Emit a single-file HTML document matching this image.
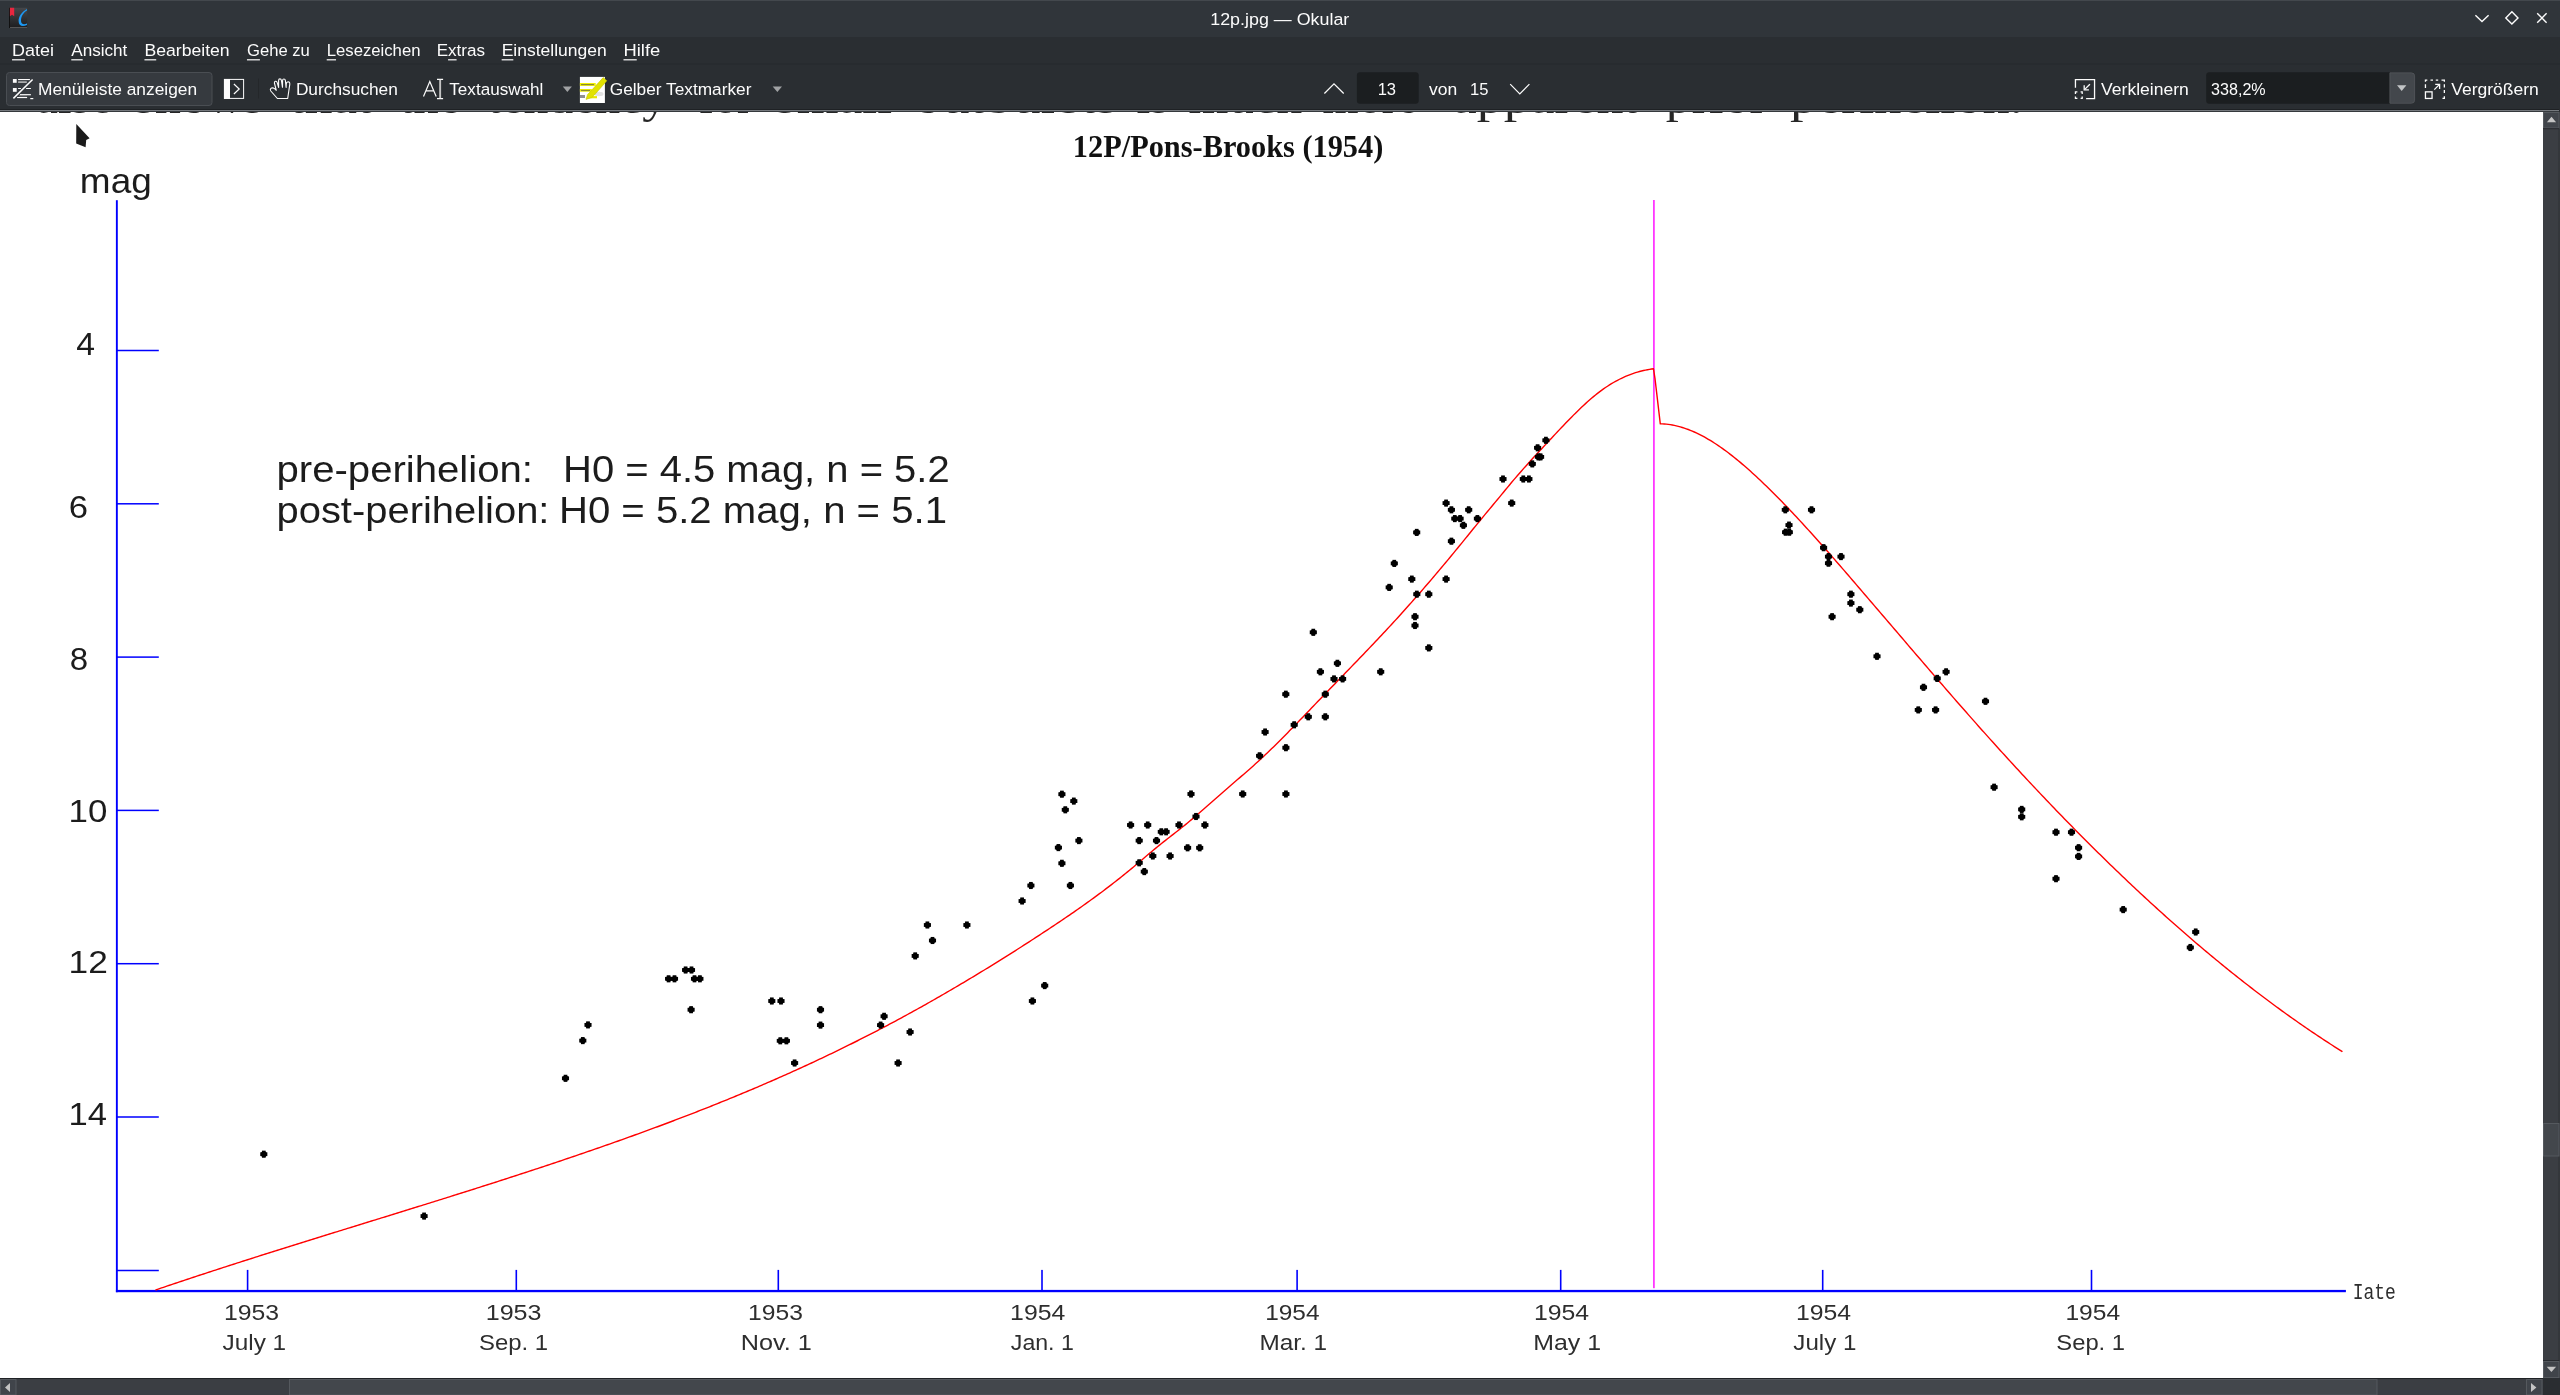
<!DOCTYPE html><html><head><meta charset="utf-8"><title>12p.jpg — Okular</title><style>html,body{margin:0;padding:0;width:2560px;height:1395px;overflow:hidden;background:#2a2e32;font-family:"Liberation Sans",sans-serif}</style></head><body><svg width="2560" height="1395" viewBox="0 0 2560 1395" style="display:block;position:absolute;left:0;top:0;will-change:transform">
<defs><clipPath id="cc"><rect x="0" y="112" width="2543" height="1266"/></clipPath></defs>
<rect x="0" y="0" width="2560" height="37" fill="#30353a"/>
<rect x="0" y="0" width="2560" height="1" fill="#43484d"/>
<rect x="0" y="37" width="2560" height="72" fill="#2a2e32"/>
<rect x="0" y="63.5" width="2560" height="1" fill="#25282c"/>
<rect x="0" y="109" width="2560" height="1" fill="#1e2124"/>
<rect x="0" y="110" width="2560" height="1.4" fill="#75797e"/>
<rect x="0" y="111.4" width="2560" height="0.6" fill="#2a2d31"/>
<rect x="0" y="112" width="2543" height="1266" fill="#ffffff"/>
<text x="1210.24" y="25.00" font-family='"Liberation Sans", sans-serif' font-size="17.40" fill="#fcfcfc" textLength="139.06" lengthAdjust="spacingAndGlyphs" >12p.jpg — Okular</text>
<g><linearGradient id="ag" x1="0" y1="0" x2="0" y2="1"><stop offset="0" stop-color="#45474b"/><stop offset="1" stop-color="#1c1d1f"/></linearGradient><rect x="9" y="7.8" width="18.2" height="20.2" fill="url(#ag)"/><rect x="9" y="7.8" width="1" height="20.2" fill="#111"/><rect x="10" y="27" width="17.2" height="1" fill="#555"/><path d="M9.9,7.8 H14.2 V16.2 L12.05,14.8 L9.9,16.2 Z" fill="#e8263f"/><path d="M27,9 C21.5,12 18.6,16.5 18.6,21 C18.6,25.5 22,27.5 27,25 L27,23.6 C23.5,25 21,24 21,20.8 C21,16.5 23.5,12.5 27,10.6 Z" fill="#1d99f3"/></g>
<g fill="none" stroke="#fcfcfc" stroke-width="1.4"><path d="M2475.4,15.3 L2482,21.6 L2488.6,15.3"/><path d="M2511.9,11.8 L2518,17.9 L2511.9,24 L2505.8,17.9 Z"/><path d="M2537.2,13.3 L2546.6,22.7 M2546.6,13.3 L2537.2,22.7"/></g>
<text x="12.03" y="56.25" font-family='"Liberation Sans", sans-serif' font-size="17.40" fill="#fcfcfc" textLength="41.88" lengthAdjust="spacingAndGlyphs" >Datei</text>
<rect x="12.03" y="59.2" width="12.96" height="1.2" fill="#fcfcfc"/>
<text x="71.27" y="56.25" font-family='"Liberation Sans", sans-serif' font-size="17.40" fill="#fcfcfc" textLength="56.06" lengthAdjust="spacingAndGlyphs" >Ansicht</text>
<rect x="71.27" y="59.2" width="11.40" height="1.2" fill="#fcfcfc"/>
<text x="144.46" y="56.25" font-family='"Liberation Sans", sans-serif' font-size="17.40" fill="#fcfcfc" textLength="85.19" lengthAdjust="spacingAndGlyphs" >Bearbeiten</text>
<rect x="144.46" y="59.2" width="11.75" height="1.2" fill="#fcfcfc"/>
<text x="246.96" y="56.25" font-family='"Liberation Sans", sans-serif' font-size="17.40" fill="#fcfcfc" textLength="62.89" lengthAdjust="spacingAndGlyphs" >Gehe zu</text>
<rect x="246.96" y="59.2" width="12.94" height="1.2" fill="#fcfcfc"/>
<text x="326.73" y="56.25" font-family='"Liberation Sans", sans-serif' font-size="17.40" fill="#fcfcfc" textLength="93.75" lengthAdjust="spacingAndGlyphs" >Lesezeichen</text>
<rect x="326.73" y="59.2" width="9.29" height="1.2" fill="#fcfcfc"/>
<text x="436.70" y="56.25" font-family='"Liberation Sans", sans-serif' font-size="17.40" fill="#fcfcfc" textLength="48.31" lengthAdjust="spacingAndGlyphs" >Extras</text>
<rect x="448.07" y="59.2" width="8.52" height="1.2" fill="#fcfcfc"/>
<text x="501.66" y="56.25" font-family='"Liberation Sans", sans-serif' font-size="17.40" fill="#fcfcfc" textLength="105.07" lengthAdjust="spacingAndGlyphs" >Einstellungen</text>
<rect x="501.66" y="59.2" width="11.67" height="1.2" fill="#fcfcfc"/>
<text x="623.49" y="56.25" font-family='"Liberation Sans", sans-serif' font-size="17.40" fill="#fcfcfc" textLength="36.72" lengthAdjust="spacingAndGlyphs" >Hilfe</text>
<rect x="623.49" y="59.2" width="13.26" height="1.2" fill="#fcfcfc"/>
<rect x="6.5" y="72.5" width="205.5" height="33" rx="3" fill="#363a3f" stroke="#4a4e53" stroke-width="1"/>
<g fill="#fcfcfc"><rect x="12.9" y="79" width="3.8" height="3.8"/><rect x="12.9" y="88" width="3.8" height="3.8"/><rect x="18.1" y="79" width="11.8" height="1.1"/><rect x="18.1" y="81.4" width="8.7" height="1.4" fill="#c8c8c8"/><rect x="18.1" y="88" width="2.8" height="1"/><rect x="26.1" y="88" width="4.8" height="1"/><rect x="20" y="94.1" width="10.9" height="1.2"/><rect x="19.2" y="95.3" width="7.6" height="1" fill="#8a8a8a"/><rect x="17.1" y="97" width="10" height="1.1"/><rect x="30.3" y="98" width="3" height="1.2"/></g>
<path d="M13.4,98.4 L32.6,79.5" stroke="#fcfcfc" stroke-width="1.5" fill="none"/>
<text x="37.98" y="94.80" font-family='"Liberation Sans", sans-serif' font-size="17.40" fill="#fcfcfc" textLength="159.15" lengthAdjust="spacingAndGlyphs" >Menüleiste anzeigen</text>
<rect x="224.4" y="79.4" width="19.2" height="19" fill="none" stroke="#fcfcfc" stroke-width="1"/><rect x="224" y="79" width="6" height="19.9" fill="#fcfcfc"/><path d="M233.9,84 L239.2,89 L233.9,94" fill="none" stroke="#fcfcfc" stroke-width="1.2"/>
<rect x="258" y="78.5" width="1" height="20" fill="#24272a"/>
<path d="M277.4,98.5 L287.7,98.5 L289.8,84.2 Q289.9,81.8 288.1,81.8 Q286.4,81.9 286.3,83.8 L286.1,87.4 L285.4,80.6 Q285.2,79 283.9,79 Q282.6,79 282.6,80.6 L282.5,87.3 L281.4,80.4 Q281.2,78.9 279.9,78.9 Q278.6,78.9 278.6,80.5 L278.6,87.4 L277.2,82.6 Q276.8,81.1 275.5,81.3 Q274.2,81.6 274.4,83 L276.3,90.3 L274.6,88.6 Q272.4,87.2 270.9,88.4 Q269.8,89.6 270.8,91 Z" fill="none" stroke="#fcfcfc" stroke-width="1.1" stroke-linejoin="round"/>
<text x="295.88" y="94.80" font-family='"Liberation Sans", sans-serif' font-size="17.40" fill="#fcfcfc" textLength="101.94" lengthAdjust="spacingAndGlyphs" >Durchsuchen</text>
<path d="M423.5,96.5 L429.8,81.6 L436.2,96.5 M426.3,90.9 L433.4,90.9" fill="none" stroke="#fcfcfc" stroke-width="1.2"/><path d="M437,79.4 H443.1 M437,98.6 H443.1" stroke="#fcfcfc" stroke-width="1.2"/><rect x="439.2" y="79.8" width="1.9" height="18.4" fill="#c4c4c4"/>
<text x="449.32" y="94.80" font-family='"Liberation Sans", sans-serif' font-size="17.40" fill="#fcfcfc" textLength="94.00" lengthAdjust="spacingAndGlyphs" >Textauswahl</text>
<path d="M562.8,86.6 L571.9,86.6 L567.35,92 Z" fill="#a0a2a4"/>
<rect x="579.9" y="76.9" width="25" height="26.1" fill="#ffffff"/><rect x="579.9" y="83" width="15.8" height="2.9" fill="#f0f000"/><rect x="579.9" y="89" width="11.9" height="2.7" fill="#f0f000"/><rect x="587" y="96.1" width="10" height="2.2" fill="#e8e800"/><ellipse cx="599" cy="94" rx="4.5" ry="2.2" fill="#e2e2e2"/><rect x="580" y="95" width="5" height="3" fill="#909090"/><rect x="581" y="84" width="13" height="1.2" fill="#8a8a30"/><rect x="581" y="89.9" width="9" height="1.2" fill="#8a8a30"/><path d="M603.2,77.6 L606.8,80.8 L594.4,95 L591.6,97.6 L586,99.4 L587.6,94.4 L590,92 Z" fill="#e2e200" stroke="#c4c400" stroke-width="0.6"/>
<text x="609.74" y="94.80" font-family='"Liberation Sans", sans-serif' font-size="17.40" fill="#fcfcfc" textLength="141.74" lengthAdjust="spacingAndGlyphs" >Gelber Textmarker</text>
<path d="M772.7,86.6 L782,86.6 L777.35,92 Z" fill="#a0a2a4"/>
<path d="M1324.4,93.5 L1334,83.8 L1343.7,93.5" fill="none" stroke="#fcfcfc" stroke-width="1.2"/>
<rect x="1356.9" y="72.3" width="61.8" height="31.5" rx="3" fill="#1b1e20"/>
<text x="1377.64" y="94.90" font-family='"Liberation Sans", sans-serif' font-size="17.40" fill="#fcfcfc" textLength="18.39" lengthAdjust="spacingAndGlyphs" >13</text>
<text x="1428.94" y="94.90" font-family='"Liberation Sans", sans-serif' font-size="17.40" fill="#fcfcfc" textLength="28.20" lengthAdjust="spacingAndGlyphs" >von</text>
<text x="1469.94" y="94.90" font-family='"Liberation Sans", sans-serif' font-size="17.40" fill="#fcfcfc" textLength="18.46" lengthAdjust="spacingAndGlyphs" >15</text>
<path d="M1510.2,84.2 L1519.8,94 L1529.4,84.2" fill="none" stroke="#fcfcfc" stroke-width="1.2"/>
<g fill="none" stroke="#fcfcfc" stroke-width="1.3"><path d="M2075.45,87.8 V79.7 H2094.55 V98.55 H2086.1"/><path d="M2089.9,84.2 L2084.7,89.4"/><path d="M2084.2,85.2 V89.9 H2088.9"/><path d="M2075.45,93.9 V91.95 H2077.4 M2080.6,91.95 H2082.2 V93.9 M2082.2,96.6 V98.35 H2080.6 M2077.4,98.35 H2075.45 V96.6"/></g>
<text x="2101.12" y="94.70" font-family='"Liberation Sans", sans-serif' font-size="17.40" fill="#fcfcfc" textLength="87.70" lengthAdjust="spacingAndGlyphs" >Verkleinern</text>
<rect x="2206.2" y="72.3" width="208.4" height="31.5" rx="3" fill="#1b1e20"/>
<path d="M2389.9,72.8 H2411.6 Q2414.6,72.8 2414.6,75.8 V100.3 Q2414.6,103.3 2411.6,103.3 H2389.9 Z" fill="#43474c" stroke="#56595e" stroke-width="0.8"/>
<path d="M2397,85.3 L2406.4,85.3 L2401.7,90.9 Z" fill="#c2c4c6"/>
<text x="2211.09" y="94.70" font-family='"Liberation Sans", sans-serif' font-size="17.40" fill="#fcfcfc" textLength="54.59" lengthAdjust="spacingAndGlyphs" >338,2%</text>
<g fill="none" stroke="#fcfcfc" stroke-width="1.3"><rect x="2425.45" y="91.85" width="6.6" height="6.6"/><path d="M2434.3,89.6 L2439.3,84.6"/><path d="M2435.2,84.35 H2439.6 V88.9"/><path d="M2425.45,81.8 V80.05 H2427.3 M2430.5,80.05 H2433 M2435.8,80.05 H2438.2 M2441.5,80.05 H2444.35 V81.8 M2444.35,84.2 V87.4 M2444.35,89.9 V93.1 M2444.35,96.2 V98.35 H2442.5 M2425.45,84.2 V88"/></g>
<text x="2451.22" y="94.70" font-family='"Liberation Sans", sans-serif' font-size="17.40" fill="#fcfcfc" textLength="87.60" lengthAdjust="spacingAndGlyphs" >Vergrößern</text>
<g clip-path="url(#cc)">
<text x="36.29" y="113.40" font-family='"Liberation Serif", serif' font-size="44.00" fill="#262626" textLength="78.57" lengthAdjust="spacingAndGlyphs" >also</text>
<text x="134.88" y="113.40" font-family='"Liberation Serif", serif' font-size="44.00" fill="#262626" textLength="128.98" lengthAdjust="spacingAndGlyphs" >shows</text>
<text x="289.46" y="113.40" font-family='"Liberation Serif", serif' font-size="44.00" fill="#262626" textLength="82.86" lengthAdjust="spacingAndGlyphs" >that</text>
<text x="399.51" y="113.40" font-family='"Liberation Serif", serif' font-size="44.00" fill="#262626" textLength="61.23" lengthAdjust="spacingAndGlyphs" >the</text>
<text x="487.51" y="113.40" font-family='"Liberation Serif", serif' font-size="44.00" fill="#262626" textLength="179.68" lengthAdjust="spacingAndGlyphs" >tendency</text>
<text x="698.58" y="113.40" font-family='"Liberation Serif", serif' font-size="44.00" fill="#262626" textLength="53.83" lengthAdjust="spacingAndGlyphs" >for</text>
<text x="775.80" y="113.40" font-family='"Liberation Serif", serif' font-size="44.00" fill="#262626" textLength="116.28" lengthAdjust="spacingAndGlyphs" >small</text>
<text x="913.88" y="113.40" font-family='"Liberation Serif", serif' font-size="44.00" fill="#262626" textLength="204.13" lengthAdjust="spacingAndGlyphs" >outbursts</text>
<text x="1136.46" y="113.40" font-family='"Liberation Serif", serif' font-size="44.00" fill="#262626" textLength="32.92" lengthAdjust="spacingAndGlyphs" >is</text>
<text x="1188.42" y="113.40" font-family='"Liberation Serif", serif' font-size="44.00" fill="#262626" textLength="113.85" lengthAdjust="spacingAndGlyphs" >much</text>
<text x="1322.53" y="113.40" font-family='"Liberation Serif", serif' font-size="44.00" fill="#262626" textLength="95.08" lengthAdjust="spacingAndGlyphs" >more</text>
<text x="1452.81" y="113.40" font-family='"Liberation Serif", serif' font-size="44.00" fill="#262626" textLength="185.51" lengthAdjust="spacingAndGlyphs" >apparent</text>
<text x="1665.76" y="113.40" font-family='"Liberation Serif", serif' font-size="44.00" fill="#262626" textLength="101.10" lengthAdjust="spacingAndGlyphs" >prior</text>
<text x="1790.13" y="113.40" font-family='"Liberation Serif", serif' font-size="44.00" fill="#262626" textLength="232.84" lengthAdjust="spacingAndGlyphs" >perihelion.</text>
<path d="M76.3,124 L89.6,138.3 L86.2,140 L85.6,147.3 L76.2,143.6 Z" fill="#1a1a1a"/>
<rect x="115.9" y="200.2" width="1.9" height="1092" fill="#0000ff"/>
<rect x="115.9" y="1289.9" width="2230" height="2.3" fill="#0000ff"/>
<rect x="116" y="349.75" width="42.8" height="1.5" fill="#0000ff"/>
<rect x="116" y="503.05" width="42.8" height="1.5" fill="#0000ff"/>
<rect x="116" y="656.35" width="42.8" height="1.5" fill="#0000ff"/>
<rect x="116" y="809.65" width="42.8" height="1.5" fill="#0000ff"/>
<rect x="116" y="962.95" width="42.8" height="1.5" fill="#0000ff"/>
<rect x="116" y="1116.25" width="42.8" height="1.5" fill="#0000ff"/>
<rect x="116" y="1269.75" width="42.8" height="1.5" fill="#0000ff"/>
<rect x="246.80" y="1269.9" width="1.6" height="21" fill="#0000ff"/>
<rect x="515.50" y="1269.9" width="1.6" height="21" fill="#0000ff"/>
<rect x="777.50" y="1269.9" width="1.6" height="21" fill="#0000ff"/>
<rect x="1041.20" y="1269.9" width="1.6" height="21" fill="#0000ff"/>
<rect x="1296.30" y="1269.9" width="1.6" height="21" fill="#0000ff"/>
<rect x="1559.90" y="1269.9" width="1.6" height="21" fill="#0000ff"/>
<rect x="1821.90" y="1269.9" width="1.6" height="21" fill="#0000ff"/>
<rect x="2090.70" y="1269.9" width="1.6" height="21" fill="#0000ff"/>
<rect x="1653" y="200" width="1.8" height="1088.2" fill="#ff38ff"/>
<path d="M155.5,1290.00 L157.5,1289.32 L159.5,1288.64 L161.5,1287.96 L163.5,1287.29 L165.5,1286.61 L167.5,1285.94 L169.5,1285.26 L171.5,1284.59 L173.5,1283.92 L175.5,1283.25 L177.5,1282.58 L179.5,1281.91 L181.5,1281.24 L183.5,1280.57 L185.5,1279.91 L187.5,1279.24 L189.5,1278.58 L191.5,1277.92 L193.5,1277.26 L195.5,1276.60 L197.5,1275.94 L199.5,1275.28 L201.5,1274.62 L203.5,1273.97 L205.5,1273.31 L207.5,1272.66 L209.5,1272.00 L211.5,1271.35 L213.5,1270.70 L215.5,1270.05 L217.5,1269.40 L219.5,1268.75 L221.5,1268.10 L223.5,1267.45 L225.5,1266.81 L227.5,1266.16 L229.5,1265.52 L231.5,1264.87 L233.5,1264.23 L235.5,1263.59 L237.5,1262.94 L239.5,1262.30 L241.5,1261.66 L243.5,1261.02 L245.5,1260.38 L247.5,1259.74 L249.5,1259.11 L251.5,1258.47 L253.5,1257.83 L255.5,1257.20 L257.5,1256.56 L259.5,1255.93 L261.5,1255.29 L263.5,1254.66 L265.5,1254.03 L267.5,1253.40 L269.5,1252.76 L271.5,1252.13 L273.5,1251.50 L275.5,1250.87 L277.5,1250.24 L279.5,1249.61 L281.5,1248.99 L283.5,1248.36 L285.5,1247.73 L287.5,1247.10 L289.5,1246.48 L291.5,1245.85 L293.5,1245.22 L295.5,1244.60 L297.5,1243.97 L299.5,1243.35 L301.5,1242.73 L303.5,1242.10 L305.5,1241.48 L307.5,1240.86 L309.5,1240.23 L311.5,1239.61 L313.5,1238.99 L315.5,1238.37 L317.5,1237.75 L319.5,1237.13 L321.5,1236.50 L323.5,1235.88 L325.5,1235.26 L327.5,1234.64 L329.5,1234.02 L331.5,1233.40 L333.5,1232.78 L335.5,1232.16 L337.5,1231.55 L339.5,1230.93 L341.5,1230.31 L343.5,1229.69 L345.5,1229.07 L347.5,1228.45 L349.5,1227.83 L351.5,1227.22 L353.5,1226.60 L355.5,1225.98 L357.5,1225.36 L359.5,1224.74 L361.5,1224.13 L363.5,1223.51 L365.5,1222.89 L367.5,1222.27 L369.5,1221.65 L371.5,1221.04 L373.5,1220.42 L375.5,1219.80 L377.5,1219.18 L379.5,1218.56 L381.5,1217.95 L383.5,1217.33 L385.5,1216.71 L387.5,1216.09 L389.5,1215.47 L391.5,1214.85 L393.5,1214.23 L395.5,1213.61 L397.5,1213.00 L399.5,1212.38 L401.5,1211.76 L403.5,1211.14 L405.5,1210.52 L407.5,1209.90 L409.5,1209.28 L411.5,1208.66 L413.5,1208.03 L415.5,1207.41 L417.5,1206.79 L419.5,1206.17 L421.5,1205.55 L423.5,1204.92 L425.5,1204.30 L427.5,1203.68 L429.5,1203.06 L431.5,1202.43 L433.5,1201.81 L435.5,1201.18 L437.5,1200.56 L439.5,1199.93 L441.5,1199.31 L443.5,1198.68 L445.5,1198.05 L447.5,1197.43 L449.5,1196.80 L451.5,1196.17 L453.5,1195.54 L455.5,1194.91 L457.5,1194.28 L459.5,1193.65 L461.5,1193.02 L463.5,1192.39 L465.5,1191.76 L467.5,1191.13 L469.5,1190.49 L471.5,1189.86 L473.5,1189.22 L475.5,1188.59 L477.5,1187.95 L479.5,1187.32 L481.5,1186.68 L483.5,1186.04 L485.5,1185.41 L487.5,1184.77 L489.5,1184.13 L491.5,1183.49 L493.5,1182.85 L495.5,1182.21 L497.5,1181.56 L499.5,1180.92 L501.5,1180.28 L503.5,1179.63 L505.5,1178.99 L507.5,1178.34 L509.5,1177.69 L511.5,1177.04 L513.5,1176.40 L515.5,1175.75 L517.5,1175.10 L519.5,1174.44 L521.5,1173.79 L523.5,1173.14 L525.5,1172.48 L527.5,1171.83 L529.5,1171.17 L531.5,1170.52 L533.5,1169.86 L535.5,1169.20 L537.5,1168.54 L539.5,1167.88 L541.5,1167.22 L543.5,1166.56 L545.5,1165.89 L547.5,1165.23 L549.5,1164.56 L551.5,1163.89 L553.5,1163.23 L555.5,1162.56 L557.5,1161.89 L559.5,1161.22 L561.5,1160.54 L563.5,1159.87 L565.5,1159.20 L567.5,1158.52 L569.5,1157.84 L571.5,1157.17 L573.5,1156.49 L575.5,1155.81 L577.5,1155.12 L579.5,1154.44 L581.5,1153.76 L583.5,1153.07 L585.5,1152.39 L587.5,1151.70 L589.5,1151.01 L591.5,1150.32 L593.5,1149.63 L595.5,1148.93 L597.5,1148.24 L599.5,1147.54 L601.5,1146.85 L603.5,1146.15 L605.5,1145.45 L607.5,1144.75 L609.5,1144.04 L611.5,1143.34 L613.5,1142.64 L615.5,1141.93 L617.5,1141.22 L619.5,1140.51 L621.5,1139.80 L623.5,1139.09 L625.5,1138.37 L627.5,1137.66 L629.5,1136.94 L631.5,1136.22 L633.5,1135.50 L635.5,1134.78 L637.5,1134.05 L639.5,1133.33 L641.5,1132.60 L643.5,1131.87 L645.5,1131.14 L647.5,1130.41 L649.5,1129.68 L651.5,1128.94 L653.5,1128.20 L655.5,1127.46 L657.5,1126.72 L659.5,1125.98 L661.5,1125.24 L663.5,1124.49 L665.5,1123.74 L667.5,1122.99 L669.5,1122.24 L671.5,1121.48 L673.5,1120.73 L675.5,1119.97 L677.5,1119.21 L679.5,1118.45 L681.5,1117.69 L683.5,1116.92 L685.5,1116.15 L687.5,1115.38 L689.5,1114.61 L691.5,1113.84 L693.5,1113.06 L695.5,1112.28 L697.5,1111.50 L699.5,1110.72 L701.5,1109.94 L703.5,1109.15 L705.5,1108.36 L707.5,1107.57 L709.5,1106.78 L711.5,1105.98 L713.5,1105.18 L715.5,1104.38 L717.5,1103.58 L719.5,1102.77 L721.5,1101.97 L723.5,1101.16 L725.5,1100.35 L727.5,1099.53 L729.5,1098.72 L731.5,1097.90 L733.5,1097.08 L735.5,1096.25 L737.5,1095.43 L739.5,1094.60 L741.5,1093.77 L743.5,1092.93 L745.5,1092.10 L747.5,1091.26 L749.5,1090.42 L751.5,1089.57 L753.5,1088.73 L755.5,1087.88 L757.5,1087.03 L759.5,1086.17 L761.5,1085.32 L763.5,1084.46 L765.5,1083.59 L767.5,1082.73 L769.5,1081.86 L771.5,1080.99 L773.5,1080.12 L775.5,1079.24 L777.5,1078.36 L779.5,1077.48 L781.5,1076.60 L783.5,1075.71 L785.5,1074.82 L787.5,1073.93 L789.5,1073.03 L791.5,1072.13 L793.5,1071.23 L795.5,1070.33 L797.5,1069.42 L799.5,1068.51 L801.5,1067.60 L803.5,1066.68 L805.5,1065.76 L807.5,1064.84 L809.5,1063.91 L811.5,1062.99 L813.5,1062.05 L815.5,1061.12 L817.5,1060.18 L819.5,1059.24 L821.5,1058.30 L823.5,1057.35 L825.5,1056.40 L827.5,1055.45 L829.5,1054.49 L831.5,1053.53 L833.5,1052.57 L835.5,1051.60 L837.5,1050.63 L839.5,1049.66 L841.5,1048.68 L843.5,1047.70 L845.5,1046.72 L847.5,1045.73 L849.5,1044.74 L851.5,1043.75 L853.5,1042.75 L855.5,1041.75 L857.5,1040.75 L859.5,1039.74 L861.5,1038.73 L863.5,1037.72 L865.5,1036.70 L867.5,1035.68 L869.5,1034.66 L871.5,1033.63 L873.5,1032.60 L875.5,1031.56 L877.5,1030.52 L879.5,1029.48 L881.5,1028.44 L883.5,1027.39 L885.5,1026.33 L887.5,1025.28 L889.5,1024.22 L891.5,1023.15 L893.5,1022.08 L895.5,1021.01 L897.5,1019.94 L899.5,1018.86 L901.5,1017.78 L903.5,1016.69 L905.5,1015.60 L907.5,1014.51 L909.5,1013.42 L911.5,1012.32 L913.5,1011.21 L915.5,1010.11 L917.5,1009.00 L919.5,1007.88 L921.5,1006.77 L923.5,1005.65 L925.5,1004.52 L927.5,1003.40 L929.5,1002.26 L931.5,1001.13 L933.5,999.99 L935.5,998.85 L937.5,997.71 L939.5,996.56 L941.5,995.41 L943.5,994.26 L945.5,993.10 L947.5,991.94 L949.5,990.77 L951.5,989.60 L953.5,988.43 L955.5,987.26 L957.5,986.08 L959.5,984.90 L961.5,983.72 L963.5,982.53 L965.5,981.34 L967.5,980.14 L969.5,978.95 L971.5,977.75 L973.5,976.54 L975.5,975.34 L977.5,974.13 L979.5,972.91 L981.5,971.70 L983.5,970.48 L985.5,969.25 L987.5,968.03 L989.5,966.80 L991.5,965.57 L993.5,964.33 L995.5,963.09 L997.5,961.85 L999.5,960.61 L1001.5,959.36 L1003.5,958.11 L1005.5,956.86 L1007.5,955.60 L1009.5,954.34 L1011.5,953.08 L1013.5,951.81 L1015.5,950.54 L1017.5,949.27 L1019.5,947.99 L1021.5,946.72 L1023.5,945.44 L1025.5,944.15 L1027.5,942.86 L1029.5,941.57 L1031.5,940.28 L1033.5,938.99 L1035.5,937.69 L1037.5,936.39 L1039.5,935.08 L1041.5,933.77 L1043.5,932.46 L1045.5,931.15 L1047.5,929.83 L1049.5,928.51 L1051.5,927.19 L1053.5,925.86 L1055.5,924.53 L1057.5,923.19 L1059.5,921.85 L1061.5,920.50 L1063.5,919.15 L1065.5,917.79 L1067.5,916.42 L1069.5,915.05 L1071.5,913.68 L1073.5,912.30 L1075.5,910.91 L1077.5,909.52 L1079.5,908.11 L1081.5,906.71 L1083.5,905.29 L1085.5,903.87 L1087.5,902.44 L1089.5,901.00 L1091.5,899.55 L1093.5,898.10 L1095.5,896.63 L1097.5,895.16 L1099.5,893.68 L1101.5,892.19 L1103.5,890.69 L1105.5,889.18 L1107.5,887.66 L1109.5,886.13 L1111.5,884.59 L1113.5,883.05 L1115.5,881.48 L1117.5,879.91 L1119.5,878.33 L1121.5,876.74 L1123.5,875.13 L1125.5,873.52 L1127.5,871.89 L1129.5,870.25 L1131.5,868.60 L1133.5,866.93 L1135.5,865.26 L1137.5,863.57 L1139.5,861.88 L1141.5,860.18 L1143.5,858.48 L1145.5,856.79 L1147.5,855.09 L1149.5,853.40 L1151.5,851.72 L1153.5,850.05 L1155.5,848.39 L1157.5,846.74 L1159.5,845.11 L1161.5,843.50 L1163.5,841.91 L1165.5,840.33 L1167.5,838.76 L1169.5,837.21 L1171.5,835.65 L1173.5,834.09 L1175.5,832.54 L1177.5,830.97 L1179.5,829.40 L1181.5,827.82 L1183.5,826.22 L1185.5,824.60 L1187.5,822.96 L1189.5,821.30 L1191.5,819.62 L1193.5,817.93 L1195.5,816.23 L1197.5,814.51 L1199.5,812.78 L1201.5,811.04 L1203.5,809.29 L1205.5,807.54 L1207.5,805.78 L1209.5,804.01 L1211.5,802.24 L1213.5,800.47 L1215.5,798.71 L1217.5,796.94 L1219.5,795.17 L1221.5,793.41 L1223.5,791.66 L1225.5,789.91 L1227.5,788.17 L1229.5,786.44 L1231.5,784.72 L1233.5,783.00 L1235.5,781.29 L1237.5,779.57 L1239.5,777.86 L1241.5,776.14 L1243.5,774.41 L1245.5,772.68 L1247.5,770.94 L1249.5,769.19 L1251.5,767.43 L1253.5,765.65 L1255.5,763.85 L1257.5,762.04 L1259.5,760.21 L1261.5,758.35 L1263.5,756.48 L1265.5,754.60 L1267.5,752.69 L1269.5,750.77 L1271.5,748.84 L1273.5,746.89 L1275.5,744.93 L1277.5,742.95 L1279.5,740.96 L1281.5,738.96 L1283.5,736.95 L1285.5,734.93 L1287.5,732.90 L1289.5,730.86 L1291.5,728.81 L1293.5,726.76 L1295.5,724.70 L1297.5,722.63 L1299.5,720.56 L1301.5,718.48 L1303.5,716.40 L1305.5,714.32 L1307.5,712.24 L1309.5,710.15 L1311.5,708.06 L1313.5,705.98 L1315.5,703.89 L1317.5,701.80 L1319.5,699.72 L1321.5,697.64 L1323.5,695.56 L1325.5,693.49 L1327.5,691.42 L1329.5,689.35 L1331.5,687.28 L1333.5,685.21 L1335.5,683.15 L1337.5,681.08 L1339.5,679.02 L1341.5,676.95 L1343.5,674.89 L1345.5,672.82 L1347.5,670.76 L1349.5,668.69 L1351.5,666.62 L1353.5,664.55 L1355.5,662.48 L1357.5,660.41 L1359.5,658.33 L1361.5,656.25 L1363.5,654.17 L1365.5,652.08 L1367.5,649.99 L1369.5,647.89 L1371.5,645.79 L1373.5,643.69 L1375.5,641.58 L1377.5,639.46 L1379.5,637.34 L1381.5,635.21 L1383.5,633.07 L1385.5,630.93 L1387.5,628.78 L1389.5,626.63 L1391.5,624.46 L1393.5,622.29 L1395.5,620.11 L1397.5,617.92 L1399.5,615.72 L1401.5,613.51 L1403.5,611.29 L1405.5,609.07 L1407.5,606.83 L1409.5,604.59 L1411.5,602.34 L1413.5,600.07 L1415.5,597.80 L1417.5,595.53 L1419.5,593.24 L1421.5,590.94 L1423.5,588.64 L1425.5,586.33 L1427.5,584.01 L1429.5,581.68 L1431.5,579.34 L1433.5,577.00 L1435.5,574.64 L1437.5,572.28 L1439.5,569.91 L1441.5,567.53 L1443.5,565.15 L1445.5,562.75 L1447.5,560.35 L1449.5,557.95 L1451.5,555.53 L1453.5,553.10 L1455.5,550.67 L1457.5,548.23 L1459.5,545.79 L1461.5,543.33 L1463.5,540.87 L1465.5,538.41 L1467.5,535.94 L1469.5,533.47 L1471.5,531.01 L1473.5,528.54 L1475.5,526.08 L1477.5,523.63 L1479.5,521.19 L1481.5,518.75 L1483.5,516.33 L1485.5,513.92 L1487.5,511.51 L1489.5,509.11 L1491.5,506.71 L1493.5,504.31 L1495.5,501.91 L1497.5,499.50 L1499.5,497.08 L1501.5,494.65 L1503.5,492.22 L1505.5,489.78 L1507.5,487.35 L1509.5,484.93 L1511.5,482.54 L1513.5,480.17 L1515.5,477.83 L1517.5,475.51 L1519.5,473.20 L1521.5,470.92 L1523.5,468.66 L1525.5,466.42 L1527.5,464.19 L1529.5,461.97 L1531.5,459.77 L1533.5,457.58 L1535.5,455.40 L1537.5,453.23 L1539.5,451.06 L1541.5,448.91 L1543.5,446.75 L1545.5,444.61 L1547.5,442.46 L1549.5,440.31 L1551.5,438.17 L1553.5,436.03 L1555.5,433.89 L1557.5,431.75 L1559.5,429.63 L1561.5,427.51 L1563.5,425.40 L1565.5,423.31 L1567.5,421.24 L1569.5,419.18 L1571.5,417.14 L1573.5,415.13 L1575.5,413.14 L1577.5,411.17 L1579.5,409.24 L1581.5,407.33 L1583.5,405.45 L1585.5,403.61 L1587.5,401.81 L1589.5,400.05 L1591.5,398.32 L1593.5,396.64 L1595.5,395.00 L1597.5,393.41 L1599.5,391.87 L1601.5,390.38 L1603.5,388.94 L1605.5,387.55 L1607.5,386.21 L1609.5,384.93 L1611.5,383.69 L1613.5,382.51 L1615.5,381.37 L1617.5,380.29 L1619.5,379.25 L1621.5,378.26 L1623.5,377.32 L1625.5,376.43 L1627.5,375.59 L1629.5,374.79 L1631.5,374.04 L1633.5,373.34 L1635.5,372.68 L1637.5,372.07 L1639.5,371.51 L1641.5,370.99 L1643.5,370.51 L1645.5,370.08 L1647.5,369.69 L1649.5,369.35 L1651.5,369.05 L1653.5,368.80 L1653.5,368.80 L1655,378.6 L1660.3,423.8 L1660.3,423.80 L1662.3,423.85 L1664.3,423.97 L1666.3,424.15 L1668.3,424.38 L1670.3,424.67 L1672.3,425.01 L1674.3,425.40 L1676.3,425.84 L1678.3,426.33 L1680.3,426.88 L1682.3,427.47 L1684.3,428.11 L1686.3,428.80 L1688.3,429.53 L1690.3,430.31 L1692.3,431.14 L1694.3,432.01 L1696.3,432.92 L1698.3,433.88 L1700.3,434.87 L1702.3,435.91 L1704.3,436.99 L1706.3,438.11 L1708.3,439.27 L1710.3,440.46 L1712.3,441.70 L1714.3,442.97 L1716.3,444.27 L1718.3,445.61 L1720.3,446.98 L1722.3,448.39 L1724.3,449.83 L1726.3,451.30 L1728.3,452.80 L1730.3,454.33 L1732.3,455.89 L1734.3,457.48 L1736.3,459.09 L1738.3,460.73 L1740.3,462.40 L1742.3,464.10 L1744.3,465.81 L1746.3,467.55 L1748.3,469.32 L1750.3,471.10 L1752.3,472.91 L1754.3,474.74 L1756.3,476.59 L1758.3,478.45 L1760.3,480.34 L1762.3,482.24 L1764.3,484.16 L1766.3,486.09 L1768.3,488.04 L1770.3,490.00 L1772.3,491.98 L1774.3,493.98 L1776.3,495.99 L1778.3,498.01 L1780.3,500.05 L1782.3,502.10 L1784.3,504.17 L1786.3,506.24 L1788.3,508.33 L1790.3,510.43 L1792.3,512.55 L1794.3,514.67 L1796.3,516.81 L1798.3,518.96 L1800.3,521.12 L1802.3,523.29 L1804.3,525.47 L1806.3,527.66 L1808.3,529.85 L1810.3,532.06 L1812.3,534.28 L1814.3,536.50 L1816.3,538.74 L1818.3,540.98 L1820.3,543.22 L1822.3,545.48 L1824.3,547.74 L1826.3,550.01 L1828.3,552.28 L1830.3,554.56 L1832.3,556.85 L1834.3,559.14 L1836.3,561.44 L1838.3,563.74 L1840.3,566.04 L1842.3,568.35 L1844.3,570.66 L1846.3,572.98 L1848.3,575.30 L1850.3,577.62 L1852.3,579.94 L1854.3,582.27 L1856.3,584.60 L1858.3,586.93 L1860.3,589.26 L1862.3,591.59 L1864.3,593.92 L1866.3,596.25 L1868.3,598.59 L1870.3,600.92 L1872.3,603.26 L1874.3,605.60 L1876.3,607.93 L1878.3,610.27 L1880.3,612.61 L1882.3,614.95 L1884.3,617.29 L1886.3,619.63 L1888.3,621.97 L1890.3,624.30 L1892.3,626.64 L1894.3,628.98 L1896.3,631.32 L1898.3,633.66 L1900.3,636.00 L1902.3,638.33 L1904.3,640.67 L1906.3,643.01 L1908.3,645.34 L1910.3,647.68 L1912.3,650.01 L1914.3,652.34 L1916.3,654.67 L1918.3,657.00 L1920.3,659.33 L1922.3,661.66 L1924.3,663.98 L1926.3,666.31 L1928.3,668.63 L1930.3,670.95 L1932.3,673.27 L1934.3,675.59 L1936.3,677.90 L1938.3,680.21 L1940.3,682.53 L1942.3,684.83 L1944.3,687.14 L1946.3,689.44 L1948.3,691.75 L1950.3,694.04 L1952.3,696.34 L1954.3,698.63 L1956.3,700.93 L1958.3,703.21 L1960.3,705.50 L1962.3,707.78 L1964.3,710.06 L1966.3,712.33 L1968.3,714.60 L1970.3,716.87 L1972.3,719.14 L1974.3,721.40 L1976.3,723.66 L1978.3,725.91 L1980.3,728.16 L1982.3,730.41 L1984.3,732.65 L1986.3,734.89 L1988.3,737.12 L1990.3,739.35 L1992.3,741.57 L1994.3,743.79 L1996.3,746.01 L1998.3,748.22 L2000.3,750.43 L2002.3,752.63 L2004.3,754.83 L2006.3,757.02 L2008.3,759.21 L2010.3,761.40 L2012.3,763.58 L2014.3,765.76 L2016.3,767.93 L2018.3,770.09 L2020.3,772.26 L2022.3,774.41 L2024.3,776.57 L2026.3,778.72 L2028.3,780.86 L2030.3,783.00 L2032.3,785.14 L2034.3,787.27 L2036.3,789.39 L2038.3,791.51 L2040.3,793.63 L2042.3,795.74 L2044.3,797.85 L2046.3,799.95 L2048.3,802.05 L2050.3,804.14 L2052.3,806.23 L2054.3,808.31 L2056.3,810.39 L2058.3,812.46 L2060.3,814.53 L2062.3,816.59 L2064.3,818.65 L2066.3,820.71 L2068.3,822.76 L2070.3,824.80 L2072.3,826.84 L2074.3,828.87 L2076.3,830.90 L2078.3,832.93 L2080.3,834.95 L2082.3,836.96 L2084.3,838.97 L2086.3,840.98 L2088.3,842.98 L2090.3,844.97 L2092.3,846.96 L2094.3,848.94 L2096.3,850.92 L2098.3,852.90 L2100.3,854.87 L2102.3,856.83 L2104.3,858.79 L2106.3,860.75 L2108.3,862.69 L2110.3,864.64 L2112.3,866.58 L2114.3,868.51 L2116.3,870.44 L2118.3,872.36 L2120.3,874.28 L2122.3,876.19 L2124.3,878.10 L2126.3,880.00 L2128.3,881.90 L2130.3,883.79 L2132.3,885.68 L2134.3,887.56 L2136.3,889.43 L2138.3,891.30 L2140.3,893.17 L2142.3,895.03 L2144.3,896.88 L2146.3,898.73 L2148.3,900.57 L2150.3,902.41 L2152.3,904.24 L2154.3,906.07 L2156.3,907.89 L2158.3,909.71 L2160.3,911.52 L2162.3,913.33 L2164.3,915.13 L2166.3,916.92 L2168.3,918.71 L2170.3,920.49 L2172.3,922.27 L2174.3,924.04 L2176.3,925.81 L2178.3,927.57 L2180.3,929.32 L2182.3,931.07 L2184.3,932.82 L2186.3,934.55 L2188.3,936.29 L2190.3,938.01 L2192.3,939.73 L2194.3,941.45 L2196.3,943.16 L2198.3,944.86 L2200.3,946.56 L2202.3,948.25 L2204.3,949.94 L2206.3,951.62 L2208.3,953.30 L2210.3,954.97 L2212.3,956.63 L2214.3,958.29 L2216.3,959.94 L2218.3,961.58 L2220.3,963.22 L2222.3,964.86 L2224.3,966.49 L2226.3,968.11 L2228.3,969.73 L2230.3,971.34 L2232.3,972.94 L2234.3,974.54 L2236.3,976.13 L2238.3,977.72 L2240.3,979.30 L2242.3,980.87 L2244.3,982.44 L2246.3,984.00 L2248.3,985.56 L2250.3,987.11 L2252.3,988.65 L2254.3,990.19 L2256.3,991.72 L2258.3,993.25 L2260.3,994.77 L2262.3,996.28 L2264.3,997.79 L2266.3,999.29 L2268.3,1000.78 L2270.3,1002.27 L2272.3,1003.76 L2274.3,1005.23 L2276.3,1006.70 L2278.3,1008.17 L2280.3,1009.62 L2282.3,1011.07 L2284.3,1012.52 L2286.3,1013.96 L2288.3,1015.39 L2290.3,1016.81 L2292.3,1018.23 L2294.3,1019.65 L2296.3,1021.05 L2298.3,1022.45 L2300.3,1023.85 L2302.3,1025.23 L2304.3,1026.62 L2306.3,1027.99 L2308.3,1029.36 L2310.3,1030.72 L2312.3,1032.07 L2314.3,1033.42 L2316.3,1034.76 L2318.3,1036.10 L2320.3,1037.43 L2322.3,1038.75 L2324.3,1040.07 L2326.3,1041.38 L2328.3,1042.68 L2330.3,1043.97 L2332.3,1045.26 L2334.3,1046.55 L2336.3,1047.82 L2338.3,1049.09 L2340.3,1050.35 L2342.3,1051.61 L2342.4,1051.70" fill="none" stroke="#ff0000" stroke-width="1.4" stroke-linejoin="round"/>
<defs><g id="dt"><rect x="-1.85" y="-3.55" width="3.7" height="7.1"/><rect x="-3.55" y="-1.9" width="7.1" height="3.8"/><circle r="2.85"/></g></defs>
<g fill="#000">
<use href="#dt" x="1416.7" y="532.4"/>
<use href="#dt" x="1451.4" y="541.2"/>
<use href="#dt" x="1446.1" y="503.1"/>
<use href="#dt" x="1451.4" y="509.8"/>
<use href="#dt" x="1454.8" y="518.6"/>
<use href="#dt" x="1460.1" y="518.6"/>
<use href="#dt" x="1463.4" y="525.3"/>
<use href="#dt" x="1468.7" y="509.8"/>
<use href="#dt" x="1477.4" y="518.6"/>
<use href="#dt" x="1503.0" y="479.0"/>
<use href="#dt" x="1511.7" y="503.1"/>
<use href="#dt" x="1523.3" y="479.0"/>
<use href="#dt" x="1528.9" y="479.0"/>
<use href="#dt" x="1532.3" y="463.9"/>
<use href="#dt" x="1538.4" y="456.9"/>
<use href="#dt" x="1540.6" y="456.9"/>
<use href="#dt" x="1537.6" y="447.8"/>
<use href="#dt" x="1545.9" y="440.3"/>
<use href="#dt" x="1394.3" y="563.4"/>
<use href="#dt" x="1411.8" y="579.1"/>
<use href="#dt" x="1446.1" y="579.1"/>
<use href="#dt" x="1389.2" y="587.4"/>
<use href="#dt" x="1416.8" y="594.2"/>
<use href="#dt" x="1428.8" y="594.2"/>
<use href="#dt" x="1415.0" y="616.7"/>
<use href="#dt" x="1415.0" y="625.5"/>
<use href="#dt" x="1428.8" y="647.9"/>
<use href="#dt" x="1313.3" y="632.3"/>
<use href="#dt" x="1337.4" y="663.3"/>
<use href="#dt" x="1320.4" y="671.8"/>
<use href="#dt" x="1380.7" y="671.8"/>
<use href="#dt" x="1334.0" y="678.9"/>
<use href="#dt" x="1342.6" y="678.9"/>
<use href="#dt" x="1285.8" y="694.2"/>
<use href="#dt" x="1325.3" y="694.2"/>
<use href="#dt" x="1308.3" y="716.8"/>
<use href="#dt" x="1325.3" y="716.8"/>
<use href="#dt" x="1294.2" y="724.8"/>
<use href="#dt" x="1265.1" y="732.0"/>
<use href="#dt" x="1285.9" y="747.7"/>
<use href="#dt" x="1259.6" y="755.8"/>
<use href="#dt" x="1191.0" y="794.0"/>
<use href="#dt" x="1242.7" y="794.0"/>
<use href="#dt" x="1285.9" y="794.0"/>
<use href="#dt" x="1196.0" y="816.5"/>
<use href="#dt" x="1130.6" y="825.0"/>
<use href="#dt" x="1147.7" y="825.0"/>
<use href="#dt" x="1179.0" y="825.0"/>
<use href="#dt" x="1204.9" y="825.0"/>
<use href="#dt" x="1161.3" y="831.8"/>
<use href="#dt" x="1166.1" y="831.8"/>
<use href="#dt" x="1139.2" y="840.6"/>
<use href="#dt" x="1156.5" y="840.6"/>
<use href="#dt" x="1187.6" y="847.8"/>
<use href="#dt" x="1199.7" y="847.8"/>
<use href="#dt" x="1152.8" y="856.0"/>
<use href="#dt" x="1170.1" y="856.0"/>
<use href="#dt" x="1139.2" y="862.8"/>
<use href="#dt" x="1144.3" y="871.6"/>
<use href="#dt" x="1061.9" y="794.2"/>
<use href="#dt" x="1073.8" y="801.1"/>
<use href="#dt" x="1065.3" y="809.8"/>
<use href="#dt" x="1078.9" y="840.6"/>
<use href="#dt" x="1058.4" y="847.6"/>
<use href="#dt" x="1061.9" y="863.3"/>
<use href="#dt" x="1030.9" y="885.5"/>
<use href="#dt" x="1070.4" y="885.5"/>
<use href="#dt" x="1022.1" y="901.0"/>
<use href="#dt" x="927.4" y="925.0"/>
<use href="#dt" x="966.9" y="925.0"/>
<use href="#dt" x="932.5" y="940.5"/>
<use href="#dt" x="915.2" y="955.9"/>
<use href="#dt" x="685.6" y="970.0"/>
<use href="#dt" x="691.5" y="970.0"/>
<use href="#dt" x="668.6" y="978.8"/>
<use href="#dt" x="674.5" y="978.8"/>
<use href="#dt" x="694.5" y="978.8"/>
<use href="#dt" x="699.9" y="978.8"/>
<use href="#dt" x="691.1" y="1009.7"/>
<use href="#dt" x="771.8" y="1001.0"/>
<use href="#dt" x="781.0" y="1001.0"/>
<use href="#dt" x="820.5" y="1009.7"/>
<use href="#dt" x="820.5" y="1025.1"/>
<use href="#dt" x="780.3" y="1040.8"/>
<use href="#dt" x="786.4" y="1040.8"/>
<use href="#dt" x="794.6" y="1063.0"/>
<use href="#dt" x="588.0" y="1024.9"/>
<use href="#dt" x="582.8" y="1040.6"/>
<use href="#dt" x="565.5" y="1078.3"/>
<use href="#dt" x="263.8" y="1154.2"/>
<use href="#dt" x="424.1" y="1216.1"/>
<use href="#dt" x="1044.7" y="985.6"/>
<use href="#dt" x="1032.4" y="1001.0"/>
<use href="#dt" x="884.1" y="1016.3"/>
<use href="#dt" x="880.6" y="1025.1"/>
<use href="#dt" x="910.1" y="1032.0"/>
<use href="#dt" x="898.1" y="1063.0"/>
<use href="#dt" x="1785.3" y="509.8"/>
<use href="#dt" x="1811.5" y="509.8"/>
<use href="#dt" x="1789.0" y="525.1"/>
<use href="#dt" x="1785.6" y="532.2"/>
<use href="#dt" x="1789.3" y="532.2"/>
<use href="#dt" x="1823.6" y="547.7"/>
<use href="#dt" x="1828.5" y="556.6"/>
<use href="#dt" x="1828.5" y="563.2"/>
<use href="#dt" x="1841.0" y="556.6"/>
<use href="#dt" x="1850.9" y="594.2"/>
<use href="#dt" x="1850.9" y="603.1"/>
<use href="#dt" x="1859.8" y="609.7"/>
<use href="#dt" x="1832.1" y="616.7"/>
<use href="#dt" x="1877.0" y="656.3"/>
<use href="#dt" x="1946.1" y="671.8"/>
<use href="#dt" x="1937.2" y="678.4"/>
<use href="#dt" x="1923.5" y="687.3"/>
<use href="#dt" x="1985.5" y="701.3"/>
<use href="#dt" x="1918.3" y="709.9"/>
<use href="#dt" x="1935.6" y="709.9"/>
<use href="#dt" x="1994.1" y="787.2"/>
<use href="#dt" x="2021.7" y="809.4"/>
<use href="#dt" x="2021.7" y="816.8"/>
<use href="#dt" x="2056.0" y="832.2"/>
<use href="#dt" x="2071.5" y="832.2"/>
<use href="#dt" x="2078.6" y="847.7"/>
<use href="#dt" x="2078.6" y="856.4"/>
<use href="#dt" x="2056.0" y="878.7"/>
<use href="#dt" x="2123.2" y="909.6"/>
<use href="#dt" x="2195.7" y="932.0"/>
<use href="#dt" x="2190.3" y="947.5"/>
</g>
<text x="79.84" y="193.40" font-family='"Liberation Sans", sans-serif' font-size="34.80" fill="#1c1c1c" textLength="71.94" lengthAdjust="spacingAndGlyphs" >mag</text>
<text x="76.23" y="355.30" font-family='"Liberation Sans", sans-serif' font-size="31.30" fill="#1c1c1c" textLength="18.76" lengthAdjust="spacingAndGlyphs" >4</text>
<text x="68.84" y="517.80" font-family='"Liberation Sans", sans-serif' font-size="31.30" fill="#1c1c1c" textLength="19.28" lengthAdjust="spacingAndGlyphs" >6</text>
<text x="69.66" y="669.50" font-family='"Liberation Sans", sans-serif' font-size="31.30" fill="#1c1c1c" textLength="18.37" lengthAdjust="spacingAndGlyphs" >8</text>
<text x="68.54" y="821.60" font-family='"Liberation Sans", sans-serif' font-size="31.30" fill="#1c1c1c" textLength="38.82" lengthAdjust="spacingAndGlyphs" >10</text>
<text x="68.51" y="973.40" font-family='"Liberation Sans", sans-serif' font-size="31.30" fill="#1c1c1c" textLength="39.26" lengthAdjust="spacingAndGlyphs" >12</text>
<text x="68.57" y="1125.30" font-family='"Liberation Sans", sans-serif' font-size="31.30" fill="#1c1c1c" textLength="38.45" lengthAdjust="spacingAndGlyphs" >14</text>
<text x="223.91" y="1319.80" font-family='"Liberation Sans", sans-serif' font-size="22.70" fill="#2e2e2e" textLength="55.07" lengthAdjust="spacingAndGlyphs" >1953</text>
<text x="222.52" y="1349.50" font-family='"Liberation Sans", sans-serif' font-size="22.70" fill="#2e2e2e" textLength="63.67" lengthAdjust="spacingAndGlyphs" >July 1</text>
<text x="485.69" y="1319.80" font-family='"Liberation Sans", sans-serif' font-size="22.70" fill="#2e2e2e" textLength="55.81" lengthAdjust="spacingAndGlyphs" >1953</text>
<text x="479.12" y="1349.50" font-family='"Liberation Sans", sans-serif' font-size="22.70" fill="#2e2e2e" textLength="69.05" lengthAdjust="spacingAndGlyphs" >Sep. 1</text>
<text x="748.13" y="1319.80" font-family='"Liberation Sans", sans-serif' font-size="22.70" fill="#2e2e2e" textLength="54.76" lengthAdjust="spacingAndGlyphs" >1953</text>
<text x="740.68" y="1349.50" font-family='"Liberation Sans", sans-serif' font-size="22.70" fill="#2e2e2e" textLength="71.02" lengthAdjust="spacingAndGlyphs" >Nov. 1</text>
<text x="1010.11" y="1319.80" font-family='"Liberation Sans", sans-serif' font-size="22.70" fill="#2e2e2e" textLength="55.11" lengthAdjust="spacingAndGlyphs" >1954</text>
<text x="1010.84" y="1349.50" font-family='"Liberation Sans", sans-serif' font-size="22.70" fill="#2e2e2e" textLength="62.99" lengthAdjust="spacingAndGlyphs" >Jan. 1</text>
<text x="1265.24" y="1319.80" font-family='"Liberation Sans", sans-serif' font-size="22.70" fill="#2e2e2e" textLength="54.27" lengthAdjust="spacingAndGlyphs" >1954</text>
<text x="1259.44" y="1349.50" font-family='"Liberation Sans", sans-serif' font-size="22.70" fill="#2e2e2e" textLength="67.62" lengthAdjust="spacingAndGlyphs" >Mar. 1</text>
<text x="1533.91" y="1319.80" font-family='"Liberation Sans", sans-serif' font-size="22.70" fill="#2e2e2e" textLength="55.11" lengthAdjust="spacingAndGlyphs" >1954</text>
<text x="1533.26" y="1349.50" font-family='"Liberation Sans", sans-serif' font-size="22.70" fill="#2e2e2e" textLength="67.76" lengthAdjust="spacingAndGlyphs" >May 1</text>
<text x="1795.91" y="1319.80" font-family='"Liberation Sans", sans-serif' font-size="22.70" fill="#2e2e2e" textLength="55.11" lengthAdjust="spacingAndGlyphs" >1954</text>
<text x="1793.32" y="1349.50" font-family='"Liberation Sans", sans-serif' font-size="22.70" fill="#2e2e2e" textLength="63.06" lengthAdjust="spacingAndGlyphs" >July 1</text>
<text x="2065.43" y="1319.80" font-family='"Liberation Sans", sans-serif' font-size="22.70" fill="#2e2e2e" textLength="54.69" lengthAdjust="spacingAndGlyphs" >1954</text>
<text x="2056.32" y="1349.50" font-family='"Liberation Sans", sans-serif' font-size="22.70" fill="#2e2e2e" textLength="68.74" lengthAdjust="spacingAndGlyphs" >Sep. 1</text>
<text x="2352.63" y="1299.40" font-family='"Liberation Mono", monospace' font-size="22.00" fill="#2e2e2e" textLength="43.16" lengthAdjust="spacingAndGlyphs" >Iate</text>
<text x="1072.87" y="156.90" font-family='"Liberation Serif", serif' font-size="32.00" font-weight="bold" fill="#111" textLength="310.46" lengthAdjust="spacingAndGlyphs" >12P/Pons-Brooks (1954)</text>
<text x="276.51" y="482.40" font-family='"Liberation Sans", sans-serif' font-size="36.30" fill="#1c1c1c" textLength="256.45" lengthAdjust="spacingAndGlyphs" >pre-perihelion:</text>
<text x="563.02" y="482.40" font-family='"Liberation Sans", sans-serif' font-size="36.30" fill="#1c1c1c" textLength="386.69" lengthAdjust="spacingAndGlyphs" >H0 = 4.5 mag, n = 5.2</text>
<text x="276.53" y="523.40" font-family='"Liberation Sans", sans-serif' font-size="36.30" fill="#1c1c1c" textLength="272.92" lengthAdjust="spacingAndGlyphs" >post-perihelion:</text>
<text x="558.91" y="523.40" font-family='"Liberation Sans", sans-serif' font-size="36.30" fill="#1c1c1c" textLength="388.05" lengthAdjust="spacingAndGlyphs" >H0 = 5.2 mag, n = 5.1</text>
</g>
<rect x="2543" y="112" width="17" height="1266" fill="#3b3e43"/>
<rect x="2558" y="112" width="2" height="1266" fill="#34373b"/>
<rect x="2543.5" y="112.5" width="15.5" height="15.5" fill="#40444a" stroke="#55595e" stroke-width="1"/>
<path d="M2546.9,122.2 L2556.1,122.2 L2551.5,116.8 Z" fill="#c4c4c4"/>
<rect x="2543" y="128.2" width="16" height="1" fill="#26292d"/>
<rect x="2543" y="1360.2" width="16" height="1" fill="#26292d"/>
<rect x="2559" y="108" width="1" height="4" fill="#2a2d31"/>
<rect x="2543.5" y="1123.5" width="15.5" height="32.5" fill="#43474c" stroke="#55595e" stroke-width="1"/>
<rect x="2543.5" y="1361.5" width="15.5" height="16" fill="#40444a" stroke="#55595e" stroke-width="1"/>
<path d="M2546.7,1366.8 L2556.1,1366.8 L2551.4,1372.1 Z" fill="#c4c4c4"/>
<rect x="0" y="1378" width="2543" height="17" fill="#3b3e43"/>
<rect x="0" y="1378" width="2543" height="1" fill="#1f2225"/>
<rect x="0.5" y="1379.5" width="15.5" height="15.5" fill="#40444a" stroke="#55595e" stroke-width="1"/>
<path d="M10,1383 L10,1392 L5,1387.5 Z" fill="#c4c4c4"/>
<rect x="289.5" y="1379.5" width="2087.5" height="15.5" fill="#43474c" stroke="#55595e" stroke-width="1"/>
<rect x="2526.5" y="1379.5" width="15.5" height="15.5" fill="#40444a" stroke="#55595e" stroke-width="1"/>
<path d="M2531,1382.9 L2531,1391.9 L2536.4,1387.4 Z" fill="#c4c4c4"/>
<rect x="2543" y="1378" width="17" height="17" fill="#2a2d31"/>
</svg></body></html>
